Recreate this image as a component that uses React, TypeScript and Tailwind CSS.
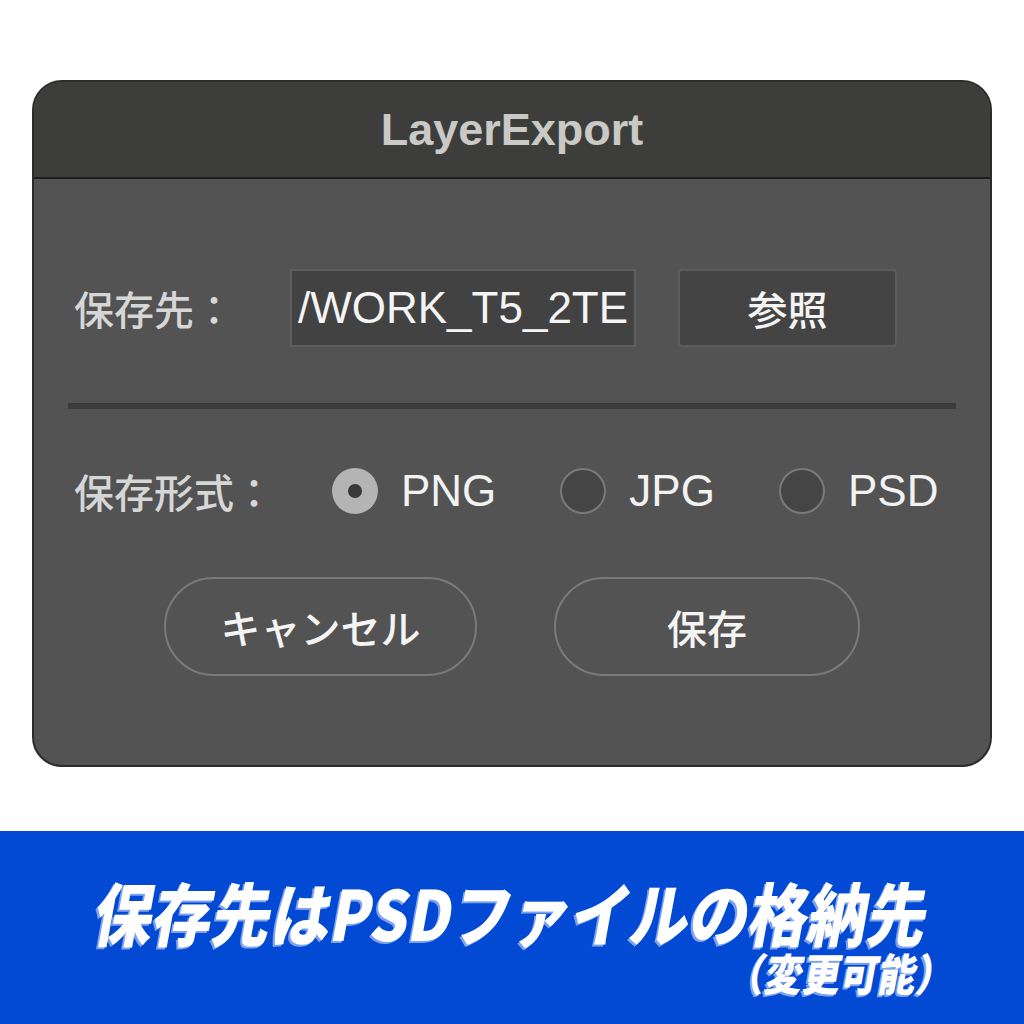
import React from "react";

const jp = { fontFamily: '"Noto Sans CJK JP", "Noto Sans", sans-serif' } as React.CSSProperties;
const lat = { fontFamily: '"Liberation Sans", Arial, "Noto Sans CJK JP", sans-serif' } as React.CSSProperties;

function Radio({ checked, label }: { checked?: boolean; label: string }) {
  return (
    <div className="flex items-center gap-[23px]">
      {checked ? (
        <div className="w-[46px] h-[46px] rounded-full bg-[#b4b4b4] flex items-center justify-center">
          <div className="w-[14px] h-[14px] rounded-full bg-[#3a3a3a]" />
        </div>
      ) : (
        <div className="w-[46px] h-[46px] rounded-full bg-[#454545] border-2 border-[#7a7a7a]" />
      )}
      <span className="text-[44px] leading-none text-[#f2f2f2]" style={lat}>
        {label}
      </span>
    </div>
  );
}

export default function App() {
  return (
    <div className="w-[1024px] h-[1024px] bg-white flex flex-col overflow-hidden">
      <div className="mt-[80px] ml-[32px] w-[960px] h-[687px] rounded-[30px] border-2 border-[#2c2c2c] bg-[#535353] overflow-hidden flex flex-col">
        <div className="h-[97px] bg-[#3d3e3b] border-b-2 border-[#1d1d1d] flex items-center justify-center">
          <span className="text-[45px] font-bold text-[#c9c9c5] leading-none" style={lat}>
            LayerExport
          </span>
        </div>
        <div className="flex flex-col px-[34px]">
          <div className="mt-[90px] flex items-center pl-[6px]">
            <span className="w-[216px] text-[40px] font-medium leading-none text-[#d6d6d6]" style={jp}>
              保存先：
            </span>
            <div className="w-[346px] h-[78px] bg-[#424242] border-2 border-[#5e5e5e] overflow-hidden flex items-center pl-[6px]">
              <span className="text-[44px] leading-none text-[#f4f4f4] whitespace-nowrap" style={lat}>
                /WORK_T5_2TE
              </span>
            </div>
            <div className="ml-[42px] w-[219px] h-[78px] bg-[#444444] border-2 border-[#5c5c5c] rounded-[4px] flex items-center justify-center">
              <span className="text-[40px] font-medium leading-none text-[#f4f4f4]" style={jp}>
                参照
              </span>
            </div>
          </div>
          <div className="mt-[56px] h-[6px] bg-[#3c3c3c]" />
          <div className="mt-[59px] flex items-center pl-[6px]">
            <span className="w-[258px] text-[40px] font-medium leading-none text-[#d6d6d6]" style={jp}>
              保存形式：
            </span>
            <div className="flex items-center gap-[64px]">
              <Radio checked label="PNG" />
              <Radio label="JPG" />
              <Radio label="PSD" />
            </div>
          </div>
          <div className="mt-[63px] flex items-center pl-[96px] gap-[77px]">
            <div className="w-[313px] h-[99px] rounded-full border-2 border-[#7a7a7a] flex items-center justify-center">
              <span className="text-[40px] font-medium leading-none text-[#f4f4f4]" style={jp}>
                キャンセル
              </span>
            </div>
            <div className="w-[306px] h-[99px] rounded-full border-2 border-[#7a7a7a] flex items-center justify-center">
              <span className="text-[40px] font-medium leading-none text-[#f4f4f4]" style={jp}>
                保存
              </span>
            </div>
          </div>
        </div>
      </div>
      <div className="mt-[64px] h-[193px] bg-[#0249d4] flex flex-col items-center pt-[46px]">
        <div className="flex flex-col items-end">
          <div
            className="text-[69px] font-black leading-none text-white -skew-x-12 scale-x-[0.86] whitespace-nowrap [text-shadow:-2px_2px_0_#7fa2f0]"
            style={jp}
          >
            保存先はPSDファイルの格納先
          </div>
          <div
            className="mt-[4px] mr-[22px] text-[44px] font-black leading-none text-white -skew-x-12 scale-x-[0.86] whitespace-nowrap [text-shadow:-2px_2px_0_#7fa2f0]"
            style={jp}
          >
            （変更可能）
          </div>
        </div>
      </div>
    </div>
  );
}
